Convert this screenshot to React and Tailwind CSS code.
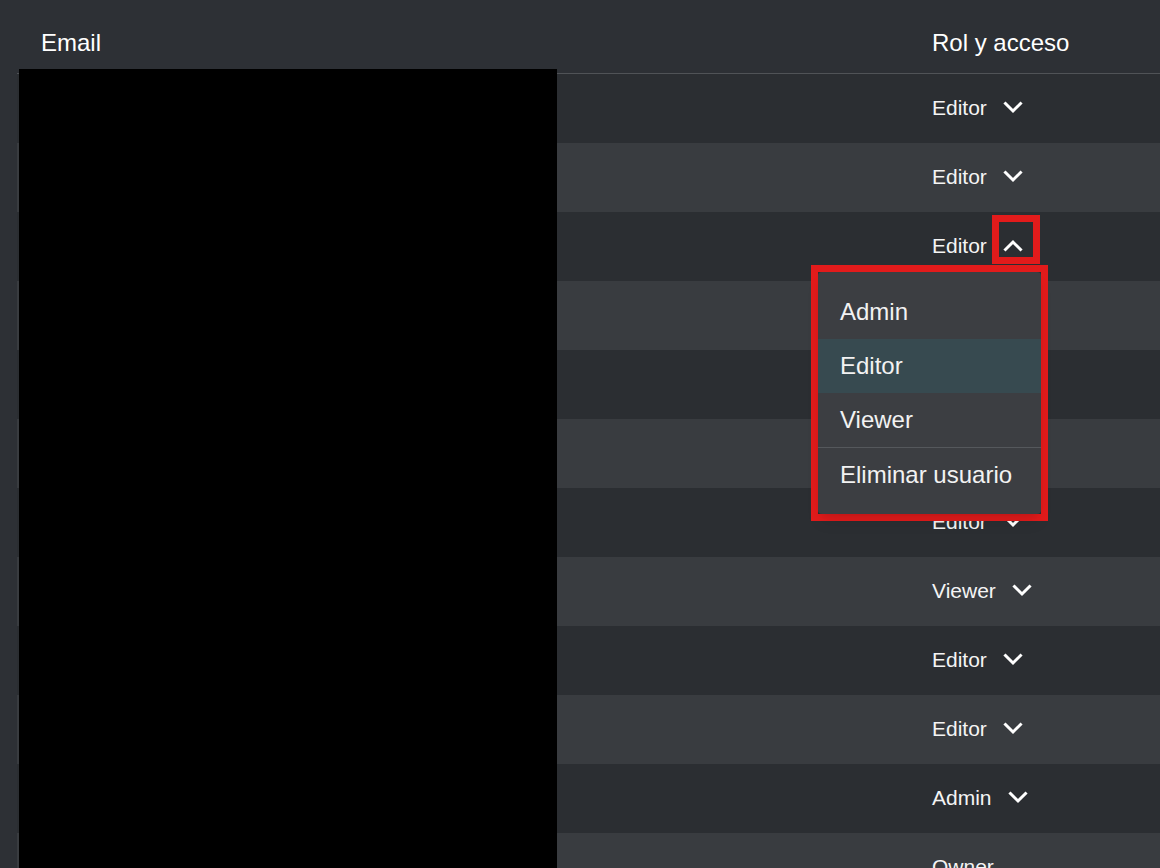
import React from 'react';

const users = [
    { role: 'Editor' },
    { role: 'Editor' },
    { role: 'Editor', open: true },
    { role: 'Editor' },
    { role: 'Editor' },
    { role: 'Editor' },
    { role: 'Editor' },
    { role: 'Viewer' },
    { role: 'Editor' },
    { role: 'Editor' },
    { role: 'Admin' },
    { role: 'Owner', fixed: true },
];

function Chevron({ up }) {
    return (
        <svg width="20" height="13" viewBox="0 0 20 13" fill="none" className="block">
            <path
                d={up ? 'M2.5 10.5 L10 3 L17.5 10.5' : 'M2.5 2.5 L10 10 L17.5 2.5'}
                stroke="#ffffff"
                strokeWidth="3"
                strokeLinecap="square"
            />
        </svg>
    );
}

function RoleMenu() {
    const options = ['Admin', 'Editor', 'Viewer'];
    return (
        // red annotation frame around the open menu
        <div className="absolute left-[-97px] top-[31px] z-20 border-[7px] border-[#e21b1b]">
            <div className="w-[223px] rounded-[4px] bg-[#3c3e42] pt-[13px] pb-3 shadow-lg">
                {options.map(opt => (
                    <div
                        key={opt}
                        className={`flex h-[54px] items-center px-[22px] text-[24px] leading-[28px] text-[#f2f2f2] ${opt === 'Editor' ? 'bg-[#374a50]' : ''}`}
                    >
                        {opt}
                    </div>
                ))}
                <div className="h-px bg-[#55585c]" />
                <div className="flex h-[54px] items-center px-[22px] text-[24px] leading-[28px] text-[#f2f2f2]">
                    Eliminar usuario
                </div>
            </div>
        </div>
    );
}

export default function App() {
    return (
        <div
            className="relative h-screen overflow-hidden bg-[#2d3035] pl-[17px]"
            style={{ fontFamily: '"Liberation Sans", Arial, sans-serif' }}
        >
            {/* Header */}
            <div className="flex h-[74px] border-b border-[#505357] pt-[29px] text-[24px] leading-[28px] text-white">
                <div className="w-[891px] pl-6">Email</div>
                <div className="pl-6">Rol y acceso</div>
            </div>

            {/* Rows */}
            {users.map((user, i) => (
                <div
                    key={i}
                    className={`flex h-[69px] items-center ${i % 2 === 0 ? 'bg-[#2b2e32]' : 'bg-[#393c40]'}`}
                >
                    <div className="w-[891px]" />
                    <div className="relative flex items-center pb-[2px] pl-6 text-[21px] leading-6 text-[#f4f4f4]">
                        <span>{user.role}</span>
                        {!user.fixed && (
                            <span className="relative ml-4">
                                <Chevron up={user.open} />
                                {user.open && (
                                    <span className="absolute left-[-11px] top-[-24px] h-[49px] w-[48px] border-[7px] border-[#e21b1b]" />
                                )}
                            </span>
                        )}
                        {user.open && <RoleMenu />}
                    </div>
                </div>
            ))}

            {/* Redacted email column */}
            <div className="absolute left-[19px] top-[69px] z-10 h-[900px] w-[538px] bg-black" />
        </div>
    );
}
